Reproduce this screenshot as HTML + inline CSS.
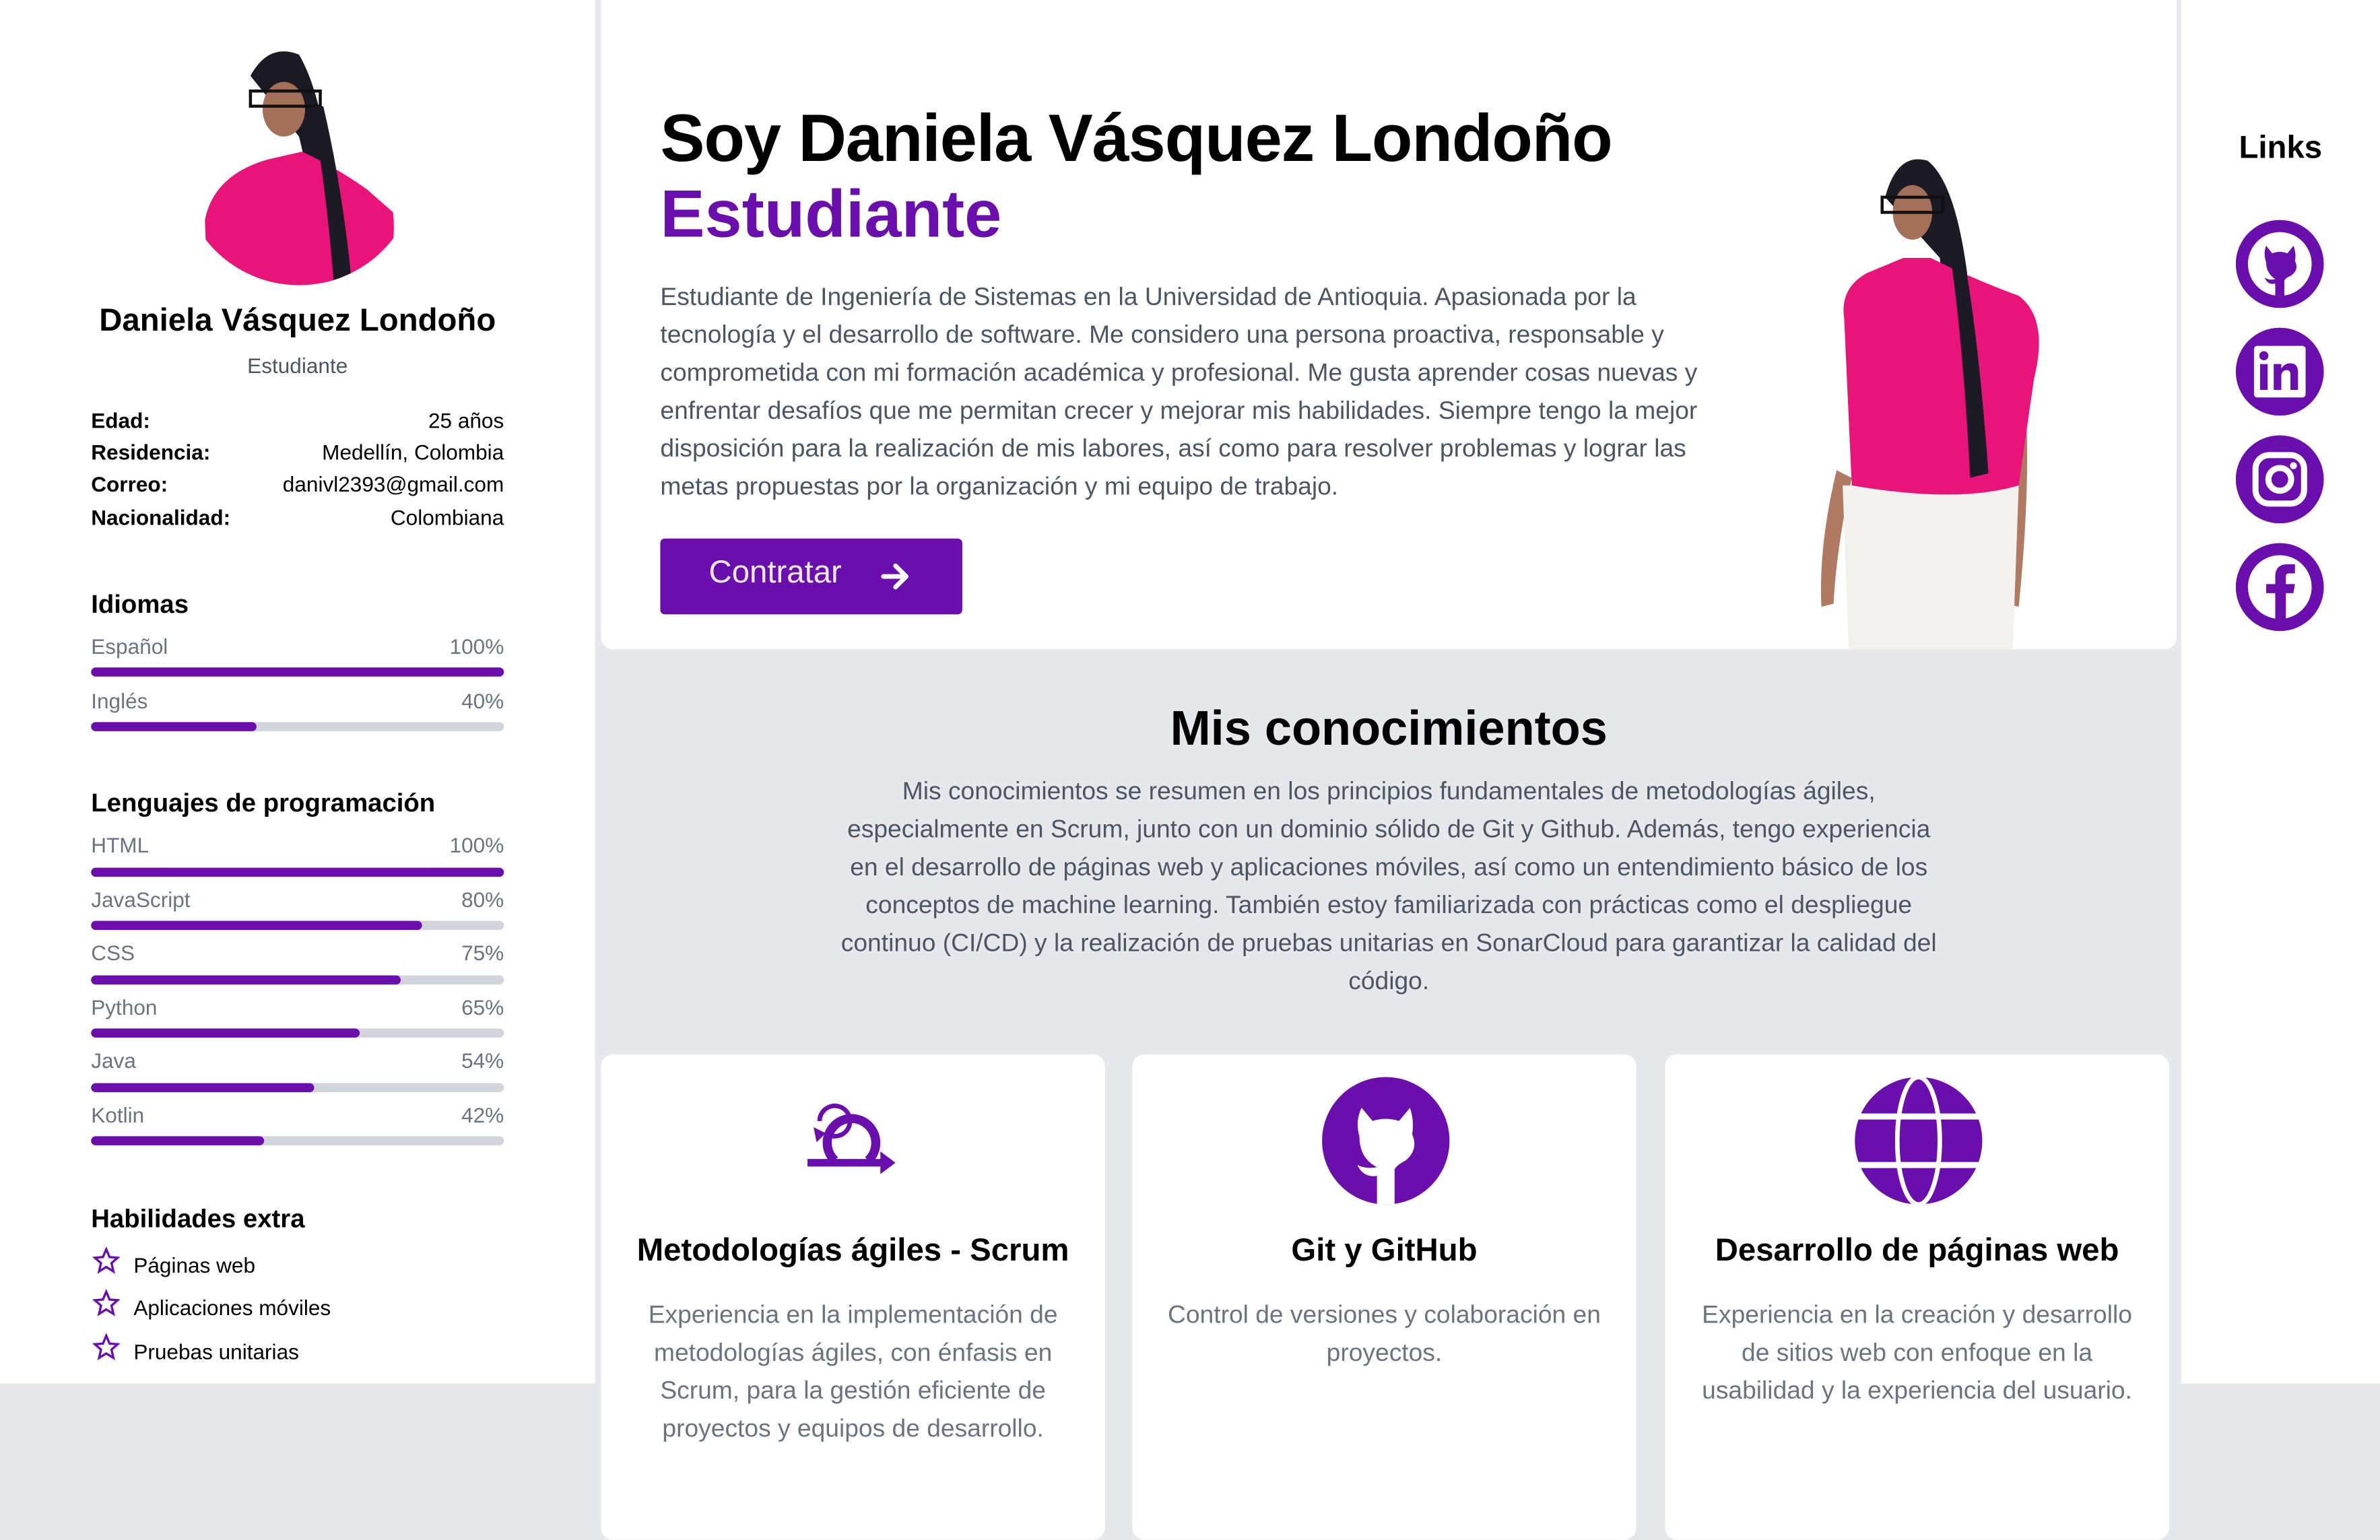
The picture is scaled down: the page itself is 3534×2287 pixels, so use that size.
<!DOCTYPE html>
<html><head><meta charset="utf-8">
<style>
html,body{margin:0;padding:0;}
body{width:3534px;height:2237px;overflow:hidden;background:#e5e7eb;font-family:"Liberation Sans",Arial,sans-serif;}
#w{position:absolute;left:0;top:0;width:1568px;height:993px;transform:scale(2.2538,2.2528);transform-origin:0 0;background:#e5e7eb;}
.a{position:absolute;white-space:nowrap;}
.side{position:absolute;left:0;top:0;width:392px;height:912px;background:#fff;}
.right{position:absolute;left:1437px;top:0;width:131px;height:912px;background:#fff;}
.hero{position:absolute;left:396px;top:0;width:1038px;height:428px;background:#fff;border-radius:0 0 8px 8px;overflow:hidden;}
.card{position:absolute;top:695px;width:332px;height:320px;background:#fff;border-radius:8px;}
.k{font-weight:bold;font-size:14px;color:#000;}
.v{font-size:14px;color:#000;right:60px;}
.lbl{font-size:14px;color:#6b7280;}
.bar{position:absolute;left:60px;width:272px;height:6px;border-radius:3px;background:#d1d5db;}
.bar i{display:block;height:100%;border-radius:3px;background:#6a0fad;}
.ct{font-size:21px;font-weight:bold;color:#000;text-align:center;width:332px;left:0;top:118px;}
.cp{font-size:16.5px;color:#6b7280;text-align:center;width:332px;left:0;top:160px;line-height:25px;}
.li{font-size:14px;color:#000;}
</style></head><body><div id="w">

<div class="side">
  <svg class="a" style="left:117px;top:30px" width="160" height="160" viewBox="0 0 160 160">
    <defs><clipPath id="c1"><circle cx="80" cy="80" r="78"/></clipPath></defs>
    <g clip-path="url(#c1)">
      <rect width="160" height="160" fill="#fff"/>
      <path d="M48 20 Q60 -2 80 6 Q94 30 100 80 L110 170 L96 170 Q90 100 80 60 Z" fill="#1c1a24"/>
      <ellipse cx="70" cy="42" rx="14" ry="18" fill="#a5705a"/>
      <rect x="48" y="30" width="46" height="10" fill="none" stroke="#111" stroke-width="2"/>
      <path d="M20 170 L18 115 Q24 85 60 75 L82 70 Q104 80 125 95 L142 110 Q145 140 130 170 Z" fill="#e8147a"/>
      <path d="M88 40 Q98 90 104 170 L116 170 Q110 100 96 40 Z" fill="#1c1a24"/>
    </g>
  </svg>
  <div class="a" style="left:0;width:392px;text-align:center;top:200px;font-size:21px;font-weight:bold;color:#000">Daniela Vásquez Londoño</div>
  <div class="a" style="left:0;width:392px;text-align:center;top:233px;font-size:14px;color:#4b5563">Estudiante</div>
  <div class="a k" style="left:60px;top:269px">Edad:</div><div class="a v" style="top:269px">25 años</div>
  <div class="a k" style="left:60px;top:290px">Residencia:</div><div class="a v" style="top:290px">Medellín, Colombia</div>
  <div class="a k" style="left:60px;top:311px">Correo:</div><div class="a v" style="top:311px">danivl2393@gmail.com</div>
  <div class="a k" style="left:60px;top:333px">Nacionalidad:</div><div class="a v" style="top:333px">Colombiana</div>

  <div class="a" style="left:60px;top:389px;font-size:17px;font-weight:bold">Idiomas</div>
  <div class="a lbl" style="left:60px;top:418px">Español</div><div class="a lbl" style="right:60px;top:418px">100%</div>
  <div class="bar" style="top:440px"><i style="width:100%"></i></div>
  <div class="a lbl" style="left:60px;top:454px">Inglés</div><div class="a lbl" style="right:60px;top:454px">40%</div>
  <div class="bar" style="top:476px"><i style="width:40%"></i></div>

  <div class="a" style="left:60px;top:520px;font-size:17px;font-weight:bold">Lenguajes de programación</div>
  <div class="a lbl" style="left:60px;top:549px">HTML</div><div class="a lbl" style="right:60px;top:549px">100%</div>
  <div class="bar" style="top:572px"><i style="width:100%"></i></div>
  <div class="a lbl" style="left:60px;top:585px">JavaScript</div><div class="a lbl" style="right:60px;top:585px">80%</div>
  <div class="bar" style="top:607px"><i style="width:80%"></i></div>
  <div class="a lbl" style="left:60px;top:620px">CSS</div><div class="a lbl" style="right:60px;top:620px">75%</div>
  <div class="bar" style="top:643px"><i style="width:75%"></i></div>
  <div class="a lbl" style="left:60px;top:656px">Python</div><div class="a lbl" style="right:60px;top:656px">65%</div>
  <div class="bar" style="top:678px"><i style="width:65%"></i></div>
  <div class="a lbl" style="left:60px;top:691px">Java</div><div class="a lbl" style="right:60px;top:691px">54%</div>
  <div class="bar" style="top:714px"><i style="width:54%"></i></div>
  <div class="a lbl" style="left:60px;top:727px">Kotlin</div><div class="a lbl" style="right:60px;top:727px">42%</div>
  <div class="bar" style="top:749px"><i style="width:42%"></i></div>

  <div class="a" style="left:60px;top:794px;font-size:17px;font-weight:bold">Habilidades extra</div>
  <svg class="a" style="left:61px;top:822px" width="18" height="18" viewBox="0 0 24 24"><path d="M12 2l2.9 6.9 7.1.6-5.4 4.7 1.7 7.3L12 17.6 5.7 21.5l1.7-7.3L2 9.5l7.1-.6z" fill="none" stroke="#6a0fad" stroke-width="2"/></svg>
  <div class="a li" style="left:88px;top:826px">Páginas web</div>
  <svg class="a" style="left:61px;top:850px" width="18" height="18" viewBox="0 0 24 24"><path d="M12 2l2.9 6.9 7.1.6-5.4 4.7 1.7 7.3L12 17.6 5.7 21.5l1.7-7.3L2 9.5l7.1-.6z" fill="none" stroke="#6a0fad" stroke-width="2"/></svg>
  <div class="a li" style="left:88px;top:854px">Aplicaciones móviles</div>
  <svg class="a" style="left:61px;top:879px" width="18" height="18" viewBox="0 0 24 24"><path d="M12 2l2.9 6.9 7.1.6-5.4 4.7 1.7 7.3L12 17.6 5.7 21.5l1.7-7.3L2 9.5l7.1-.6z" fill="none" stroke="#6a0fad" stroke-width="2"/></svg>
  <div class="a li" style="left:88px;top:883px">Pruebas unitarias</div>
</div>

<div class="hero">
  <div class="a" style="left:39px;top:67px;font-size:44px;font-weight:bold;color:#000;letter-spacing:-0.5px">Soy Daniela Vásquez Londoño</div>
  <div class="a" style="left:39px;top:117px;font-size:44px;font-weight:bold;color:#6a0fad">Estudiante</div>
  <div class="a" style="left:39px;top:184px;font-size:16.5px;line-height:25px;color:#4b5563">Estudiante de Ingeniería de Sistemas en la Universidad de Antioquia. Apasionada por la<br>tecnología y el desarrollo de software. Me considero una persona proactiva, responsable y<br>comprometida con mi formación académica y profesional. Me gusta aprender cosas nuevas y<br>enfrentar desafíos que me permitan crecer y mejorar mis habilidades. Siempre tengo la mejor<br>disposición para la realización de mis labores, así como para resolver problemas y lograr las<br>metas propuestas por la organización y mi equipo de trabajo.</div>
  <div class="a" style="left:39px;top:355px;width:199px;height:50px;background:#6a0fad;border-radius:3px"></div>
  <div class="a" style="left:71px;top:366px;font-size:21px;color:#f3e8ff;font-weight:300">Contratar</div>
  <svg class="a" style="left:184px;top:370px" width="20" height="20" viewBox="0 0 20 20"><path d="M2 10H17M10 3l7 7-7 7" stroke="#fff" stroke-width="3" fill="none" stroke-linecap="round" stroke-linejoin="round"/></svg>
  <svg class="a" style="left:794px;top:100px" width="170" height="330" viewBox="0 0 170 330">
    <path d="M52 30 Q60 0 80 6 Q98 20 106 80 L118 215 L104 218 Q96 140 88 70 Z" fill="#1c1a24"/>
    <ellipse cx="70" cy="40" rx="13" ry="18" fill="#a5705a"/>
    <rect x="50" y="30" width="40" height="10" fill="none" stroke="#111" stroke-width="2"/>
    <path d="M20 210 Q8 260 10 300 L18 298 Q20 260 30 215 Z" fill="#b07a62"/>
    <path d="M142 140 Q150 200 140 300 L132 298 Q138 220 132 150 Z" fill="#b07a62"/>
    <path d="M28 330 L24 220 L140 220 L136 330 Z" fill="#f3f1ee"/>
    <path d="M25 110 Q22 90 40 80 L64 70 L82 70 Q110 84 140 95 Q160 110 150 150 L140 220 Q100 232 30 220 Z" fill="#e8147a"/>
    <path d="M90 40 Q102 100 108 215 L120 212 Q112 100 98 40 Z" fill="#1c1a24"/>
  </svg>
</div>

<div class="right">
  <div class="a" style="left:0;width:131px;text-align:center;top:86px;font-size:21px;font-weight:bold;color:#000">Links</div>
  <svg class="a" style="left:36px;top:145px" width="58" height="58" viewBox="0 0 58 58"><circle cx="29" cy="29" r="29" fill="#6a0fad"/><circle cx="29" cy="29" r="21" fill="#fff"/><path d="M20 17 L24 22 Q29 20 34 22 L38 17 Q40 22 39 27 Q42 33 36 37 Q33 38 32 40 L32 50 L26 50 L26 42 Q21 43 19 38 Q22 40 26 39 Q20 35 20 28 Q18 22 20 17Z" fill="#6a0fad"/></svg>
  <svg class="a" style="left:36px;top:216px" width="58" height="58" viewBox="0 0 58 58"><circle cx="29" cy="29" r="29" fill="#6a0fad"/><rect x="12" y="12" width="34" height="34" rx="2" fill="#fff"/><rect x="16" y="24" width="5" height="17" fill="#6a0fad"/><circle cx="18.5" cy="18.5" r="3" fill="#6a0fad"/><path d="M25 24h5v3q2-3.5 6-3.5q5 0 5 6V41h-5V31q0-3-2.5-3T30 31v10h-5z" fill="#6a0fad"/></svg>
  <svg class="a" style="left:36px;top:287px" width="58" height="58" viewBox="0 0 58 58"><circle cx="29" cy="29" r="29" fill="#6a0fad"/><rect x="13" y="13" width="32" height="32" rx="9" fill="none" stroke="#fff" stroke-width="4"/><circle cx="29" cy="29" r="7.5" fill="none" stroke="#fff" stroke-width="4"/><circle cx="38" cy="20" r="2.3" fill="#fff"/></svg>
  <svg class="a" style="left:36px;top:358px" width="58" height="58" viewBox="0 0 58 58"><circle cx="29" cy="29" r="29" fill="#6a0fad"/><circle cx="29" cy="29" r="21" fill="#fff"/><path d="M26 50V33h-6v-6h6v-5q0-8 8-8h5v6h-4q-2 0-2 2v5h6l-1 6h-5v17z" fill="#6a0fad"/></svg>
</div>

<div class="a" style="left:396px;width:1038px;text-align:center;top:462px;font-size:32px;font-weight:bold;color:#000">Mis conocimientos</div>
<div class="a" style="left:396px;width:1038px;text-align:center;top:510px;font-size:16.5px;line-height:25px;color:#4b5563">Mis conocimientos se resumen en los principios fundamentales de metodologías ágiles,<br>especialmente en Scrum, junto con un dominio sólido de Git y Github. Además, tengo experiencia<br>en el desarrollo de páginas web y aplicaciones móviles, así como un entendimiento básico de los<br>conceptos de machine learning. También estoy familiarizada con prácticas como el despliegue<br>continuo (CI/CD) y la realización de pruebas unitarias en SonarCloud para garantizar la calidad del<br>código.</div>

<div class="card" style="left:396px">
  <svg class="a" style="left:134px;top:30px" width="64" height="52" viewBox="0 0 64 52">
    <path d="M10 14 A10 10 0 1 1 14 22" fill="none" stroke="#6a0fad" stroke-width="3"/>
    <path d="M20 40 A16 16 0 1 1 42 40" fill="none" stroke="#6a0fad" stroke-width="6"/>
    <path d="M6 18 L8 28 L14 22Z" fill="#6a0fad"/>
    <rect x="2" y="39" width="50" height="5" fill="#6a0fad"/><path d="M50 34 L60 41.5 L50 49Z" fill="#6a0fad"/>
  </svg>
  <div class="a ct">Metodologías ágiles - Scrum</div>
  <div class="a cp">Experiencia en la implementación de<br>metodologías ágiles, con énfasis en<br>Scrum, para la gestión eficiente de<br>proyectos y equipos de desarrollo.</div>
</div>
<div class="card" style="left:746px">
  <svg class="a" style="left:125px;top:15px" width="84" height="84" viewBox="0 0 58 58"><circle cx="29" cy="29" r="29" fill="#6a0fad"/><path d="M18 14 L23 20 Q29 18 35 20 L40 14 Q42 20 41 26 Q44 33 38 38 Q34 40 33 42 L33 58 L25 58 L25 45 Q19 46 16 40 Q20 42 25 41 Q17 37 17 27 Q15 20 18 14Z" fill="#fff"/></svg>
  <div class="a ct">Git y GitHub</div>
  <div class="a cp">Control de versiones y colaboración en<br>proyectos.</div>
</div>
<div class="card" style="left:1097px">
  <svg class="a" style="left:125px;top:15px" width="84" height="84" viewBox="0 0 84 84">
    <defs><clipPath id="g"><circle cx="42" cy="42" r="42"/></clipPath></defs>
    <g clip-path="url(#g)"><circle cx="42" cy="42" r="42" fill="#6a0fad"/>
    <rect x="0" y="24" width="84" height="4" fill="#fff"/><rect x="0" y="56" width="84" height="4" fill="#fff"/>
    <ellipse cx="42" cy="42" rx="14" ry="42" fill="none" stroke="#fff" stroke-width="3"/></g>
  </svg>
  <div class="a ct">Desarrollo de páginas web</div>
  <div class="a cp">Experiencia en la creación y desarrollo<br>de sitios web con enfoque en la<br>usabilidad y la experiencia del usuario.</div>
</div>

</div></body></html>
